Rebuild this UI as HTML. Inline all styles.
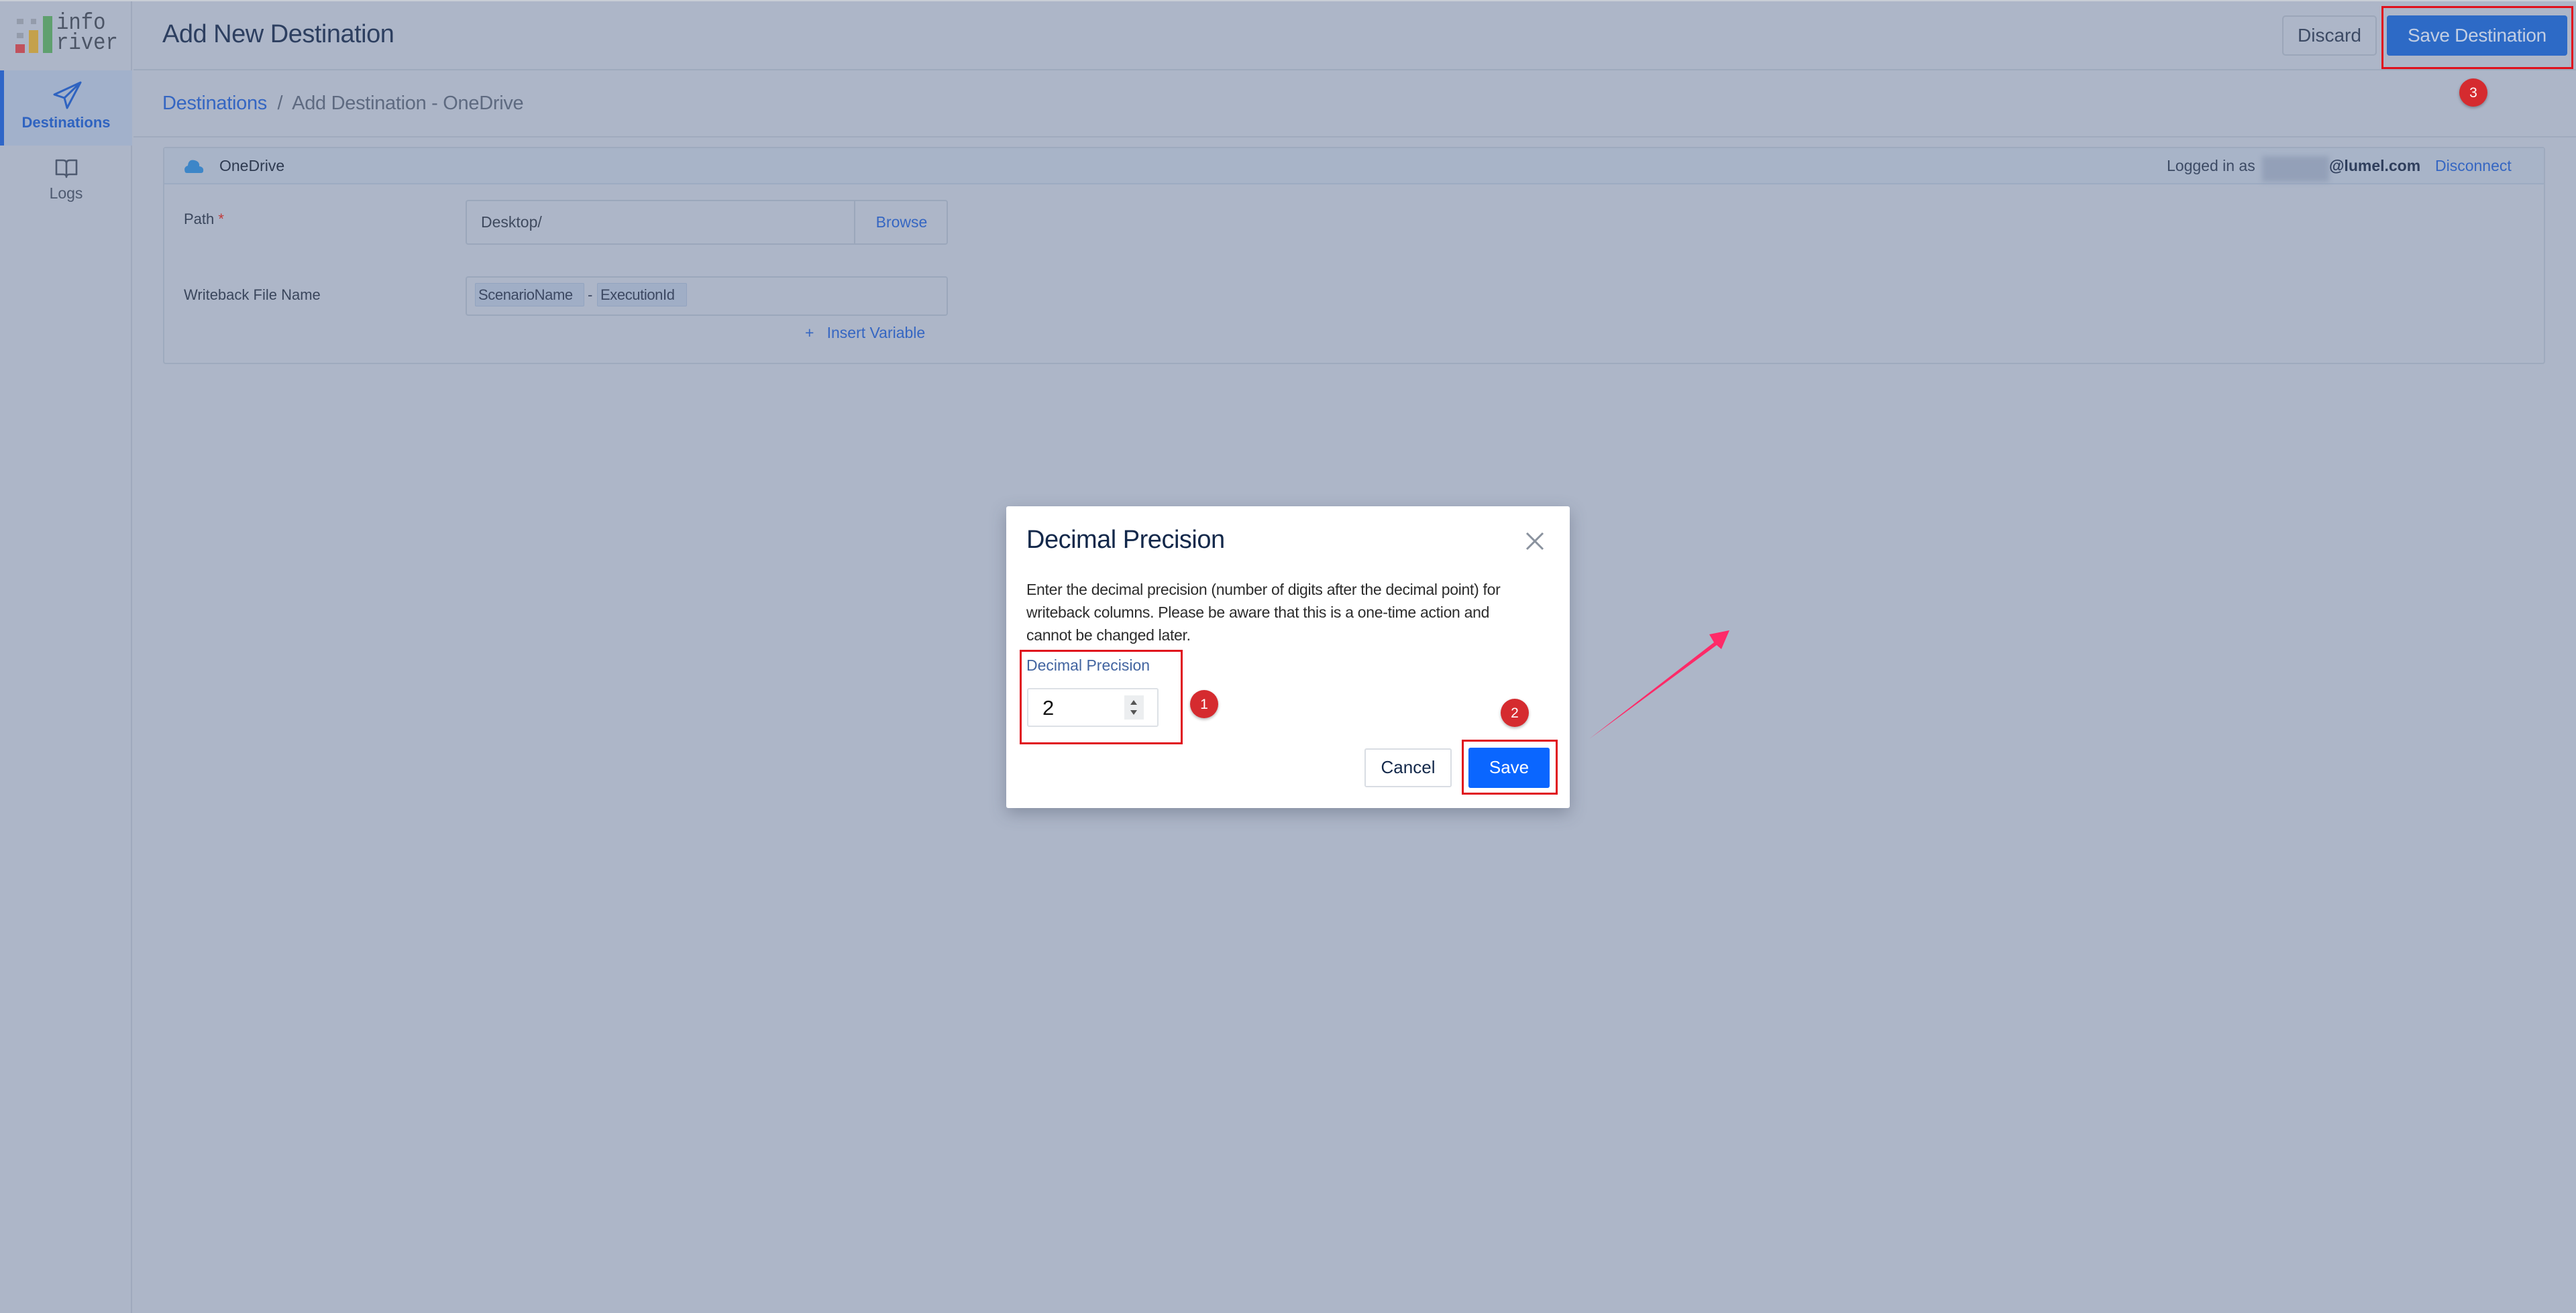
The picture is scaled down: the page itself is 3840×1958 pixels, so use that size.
<!DOCTYPE html>
<html><head><meta charset="utf-8"><style>
*{margin:0;padding:0;box-sizing:border-box}
body{width:3840px;height:1958px;background:#adb6c8;font-family:"Liberation Sans",sans-serif;position:relative;overflow:hidden}
.a{position:absolute}
.t{position:absolute;white-space:nowrap;line-height:1}
</style></head><body>
<div class="a" style="left:0;top:0;width:3840px;height:2px;background:#c9ced6"></div>
<div class="a" style="left:0;top:2px;width:197px;height:1956px;background:#adb6c8;border-right:2px solid #9fa9bd"></div>
<div class="a" style="left:0;top:105px;width:197px;height:112px;background:#a2b1cb"></div>
<div class="a" style="left:0;top:105px;width:6px;height:112px;background:#2f66c8"></div>
<div class="a" style="left:23px;top:66px;width:14px;height:13px;background:#c0525d"></div>
<div class="a" style="left:43px;top:45px;width:14px;height:34px;background:#c4a14b"></div>
<div class="a" style="left:64px;top:24px;width:14px;height:55px;background:#5fa06e"></div>
<div class="a" style="left:25px;top:28px;width:10px;height:8px;background:#949cab"></div>
<div class="a" style="left:46px;top:28px;width:8px;height:8px;background:#949cab"></div>
<div class="a" style="left:25px;top:49px;width:10px;height:8px;background:#949cab"></div>
<div class="t" style="left:84px;top:20px;font-family:'Liberation Mono',monospace;font-size:34px;color:#4c5566;line-height:30px;transform:scaleX(.9);transform-origin:left top">info<br>river</div>
<svg class="a" style="left:78px;top:121px" width="46" height="44" viewBox="0 0 46 44"><path d="M42 2 L3 20 L18 25 L22 40 Z M18 25 L42 2" fill="none" stroke="#2f63c0" stroke-width="3" stroke-linejoin="round"/></svg>
<div class="t" style="left:0;width:197px;text-align:center;top:172px;font-size:22px;font-weight:bold;color:#2f63c0">Destinations</div>
<svg class="a" style="left:82px;top:236px" width="34" height="30" viewBox="0 0 34 30"><path d="M2 3 H12 Q17 3 17 8 V28 Q17 24 12 24 H2 Z M32 3 H22 Q17 3 17 8 V28 Q17 24 22 24 H32 Z" fill="none" stroke="#4e5a70" stroke-width="2.6" stroke-linejoin="round"/></svg>
<div class="t" style="left:0;width:197px;text-align:center;top:277px;font-size:23px;color:#4e5a70">Logs</div>
<div class="a" style="left:199px;top:103px;width:3641px;height:2px;background:#9eaabd"></div>
<div class="t" style="left:242px;top:32px;font-size:38px;color:#2d3f60;letter-spacing:-0.5px">Add New Destination</div>
<div class="a" style="left:3402px;top:23px;width:141px;height:60px;border:2px solid #9ba6b9;border-radius:5px"></div>
<div class="t" style="left:3402px;width:141px;text-align:center;top:39px;font-size:28px;color:#3c4a64">Discard</div>
<div class="a" style="left:3558px;top:23px;width:269px;height:60px;background:#2d6ac6;border-radius:4px"></div>
<div class="t" style="left:3558px;width:269px;text-align:center;top:39px;font-size:28px;color:#c2cee3;letter-spacing:-0.3px">Save Destination</div>
<div class="a" style="left:3550px;top:9px;width:286px;height:94px;border:3px solid #e0101c"></div>
<div class="a" style="left:3666px;top:117px;width:42px;height:42px;border-radius:50%;background:#d52b2f;box-shadow:0 2px 4px rgba(0,0,0,.3)"></div>
<div class="t" style="left:3666px;width:42px;text-align:center;top:128px;font-size:21px;color:#fff">3</div>
<div class="t" style="left:242px;top:140px;font-size:29px;color:#3566c2;letter-spacing:-0.3px">Destinations <span style="color:#5e6a80">&nbsp;/&nbsp; Add Destination - OneDrive</span></div>
<div class="a" style="left:199px;top:203px;width:3641px;height:2px;background:#a0abbe"></div>
<div class="a" style="left:243px;top:219px;width:3551px;height:324px;border:2px solid #9eaabe;border-radius:4px"></div>
<div class="a" style="left:245px;top:221px;width:3547px;height:54px;background:#a8b4c8;border-bottom:2px solid #9cabc2"></div>
<svg class="a" style="left:273px;top:235px" width="32" height="24" viewBox="0 0 32 24"><path d="M3 22 Q0 14 7 12 Q8 2 17 4 Q25 6 24 13 Q31 14 30 20 Q30 23 26 23 H6 Q4 23 3 22Z" fill="#3d86c8"/></svg>
<div class="t" style="left:327px;top:236px;font-size:23px;color:#2e3a50">OneDrive</div>
<div class="t" style="left:3230px;top:236px;font-size:23px;color:#3c4a64">Logged in as</div>
<div class="a" style="left:3372px;top:233px;width:100px;height:38px;background:#93a0b8;filter:blur(4px)"></div>
<div class="t" style="left:3472px;top:236px;font-size:23px;font-weight:bold;color:#2f3e5c">@lumel.com</div>
<div class="t" style="left:3630px;top:236px;font-size:23px;color:#3566c2">Disconnect</div>
<div class="t" style="left:274px;top:316px;font-size:22px;color:#3a465c">Path <span style="color:#c03a3a">*</span></div>
<div class="a" style="left:694px;top:298px;width:719px;height:67px;border:2px solid #9ba7bb;border-radius:4px"></div>
<div class="a" style="left:1273px;top:298px;width:2px;height:67px;background:#9ba7bb"></div>
<div class="t" style="left:717px;top:320px;font-size:23px;color:#3f4a5e">Desktop/</div>
<div class="t" style="left:1275px;width:138px;text-align:center;top:320px;font-size:23px;color:#3566c2">Browse</div>
<div class="t" style="left:274px;top:429px;font-size:22px;color:#3a465c">Writeback File Name</div>
<div class="a" style="left:694px;top:412px;width:719px;height:59px;border:2px solid #9ba7bb;border-radius:4px"></div>
<div class="a" style="left:708px;top:422px;width:163px;height:35px;background:#a0aec6;border:1px solid #93a4c0;border-radius:2px"></div>
<div class="t" style="left:713px;top:429px;font-size:22px;color:#3c4862;letter-spacing:-0.4px">ScenarioName</div>
<div class="t" style="left:876px;top:429px;font-size:22px;color:#3c4862">-</div>
<div class="a" style="left:890px;top:422px;width:134px;height:35px;background:#a0aec6;border:1px solid #93a4c0;border-radius:2px"></div>
<div class="t" style="left:895px;top:429px;font-size:22px;color:#3c4862;letter-spacing:-0.4px">ExecutionId</div>
<div class="t" style="left:1200px;top:485px;font-size:23px;color:#3566c2">+&nbsp;&nbsp; Insert Variable</div>
<div class="a" style="left:1500px;top:755px;width:840px;height:450px;background:#fff;border-radius:3px;box-shadow:0 8px 24px rgba(60,70,90,.35)"></div>
<div class="t" style="left:1530px;top:786px;font-size:38px;color:#13284a;letter-spacing:-0.5px">Decimal Precision</div>
<svg class="a" style="left:2274px;top:793px" width="28" height="28" viewBox="0 0 28 28"><path d="M2 2 L26 26 M26 2 L2 26" stroke="#8a929e" stroke-width="3"/></svg>
<div class="a" style="left:1530px;top:862px;width:735px;font-size:23px;line-height:34px;color:#2c2c2c;letter-spacing:-0.3px">Enter the decimal precision (number of digits after the decimal point) for writeback columns. Please be aware that this is a one-time action and cannot be changed later.</div>
<div class="t" style="left:1530px;top:981px;font-size:23px;color:#4264a0">Decimal Precision</div>
<div class="a" style="left:1531px;top:1026px;width:196px;height:58px;border:2px solid #dde1e6;border-radius:3px"></div>
<div class="t" style="left:1554px;top:1040px;font-size:31px;color:#111">2</div>
<div class="a" style="left:1676px;top:1037px;width:29px;height:36px;background:#eceef0"></div>
<svg class="a" style="left:1679px;top:1041px" width="22" height="28" viewBox="0 0 22 28"><path d="M11 3 L16 10 H6Z M11 25 L16 18 H6Z" fill="#555"/></svg>
<div class="a" style="left:1520px;top:969px;width:243px;height:141px;border:3px solid #e0101c"></div>
<div class="a" style="left:1774px;top:1029px;width:42px;height:42px;border-radius:50%;background:#d52b2f;box-shadow:0 2px 4px rgba(0,0,0,.3)"></div>
<div class="t" style="left:1774px;width:42px;text-align:center;top:1040px;font-size:21px;color:#fff">1</div>
<div class="a" style="left:2237px;top:1042px;width:42px;height:42px;border-radius:50%;background:#d52b2f;box-shadow:0 2px 4px rgba(0,0,0,.3)"></div>
<div class="t" style="left:2237px;width:42px;text-align:center;top:1053px;font-size:21px;color:#fff">2</div>
<div class="a" style="left:2034px;top:1116px;width:130px;height:58px;border:2px solid #d9dde3;border-radius:3px"></div>
<div class="t" style="left:2034px;width:130px;text-align:center;top:1131px;font-size:26px;color:#13284a">Cancel</div>
<div class="a" style="left:2189px;top:1115px;width:121px;height:60px;background:#0a66ff;border-radius:3px"></div>
<div class="t" style="left:2189px;width:121px;text-align:center;top:1131px;font-size:26px;color:#fff">Save</div>
<div class="a" style="left:2179px;top:1103px;width:143px;height:82px;border:3px solid #e0101c"></div>
<svg class="a" style="left:0;top:0" width="3840" height="1958"><path d="M2369 1102 L2555 958 L2548 946 L2578 940 L2566 968 L2559 962 Z" fill="#ff2a68"/></svg>
</body></html>
